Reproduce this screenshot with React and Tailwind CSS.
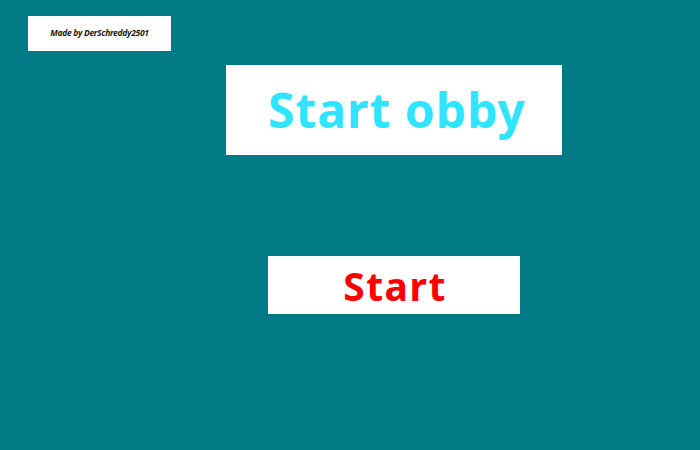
export default function App() {
  return (
    <div className="w-[700px] h-[450px] bg-[#007b86] overflow-hidden flex flex-col" style={{ fontFamily: '"Noto Sans", "Open Sans", sans-serif' }}>
      <div className="ml-[28px] mt-[16px] w-[143px] h-[35px] bg-white flex items-center justify-center">
        <span className="text-[8.5px] font-bold italic text-[#1a1a1a] tracking-[-0.3px]">Made by DerSchreddy2501</span>
      </div>
      <div className="ml-[226px] mt-[14px] w-[336px] h-[90px] bg-white flex items-center justify-center">
        <span className="text-[48px] font-bold text-[#2ee4ff] leading-none tracking-[1px] pl-[6px]">Start obby</span>
      </div>
      <div className="ml-[268px] mt-[101px] w-[252px] h-[58px] bg-white flex items-center justify-center">
        <span className="text-[39px] font-bold text-[#ff0000] leading-none tracking-[1.5px] pl-[2px]">Start</span>
      </div>
    </div>
  );
}
